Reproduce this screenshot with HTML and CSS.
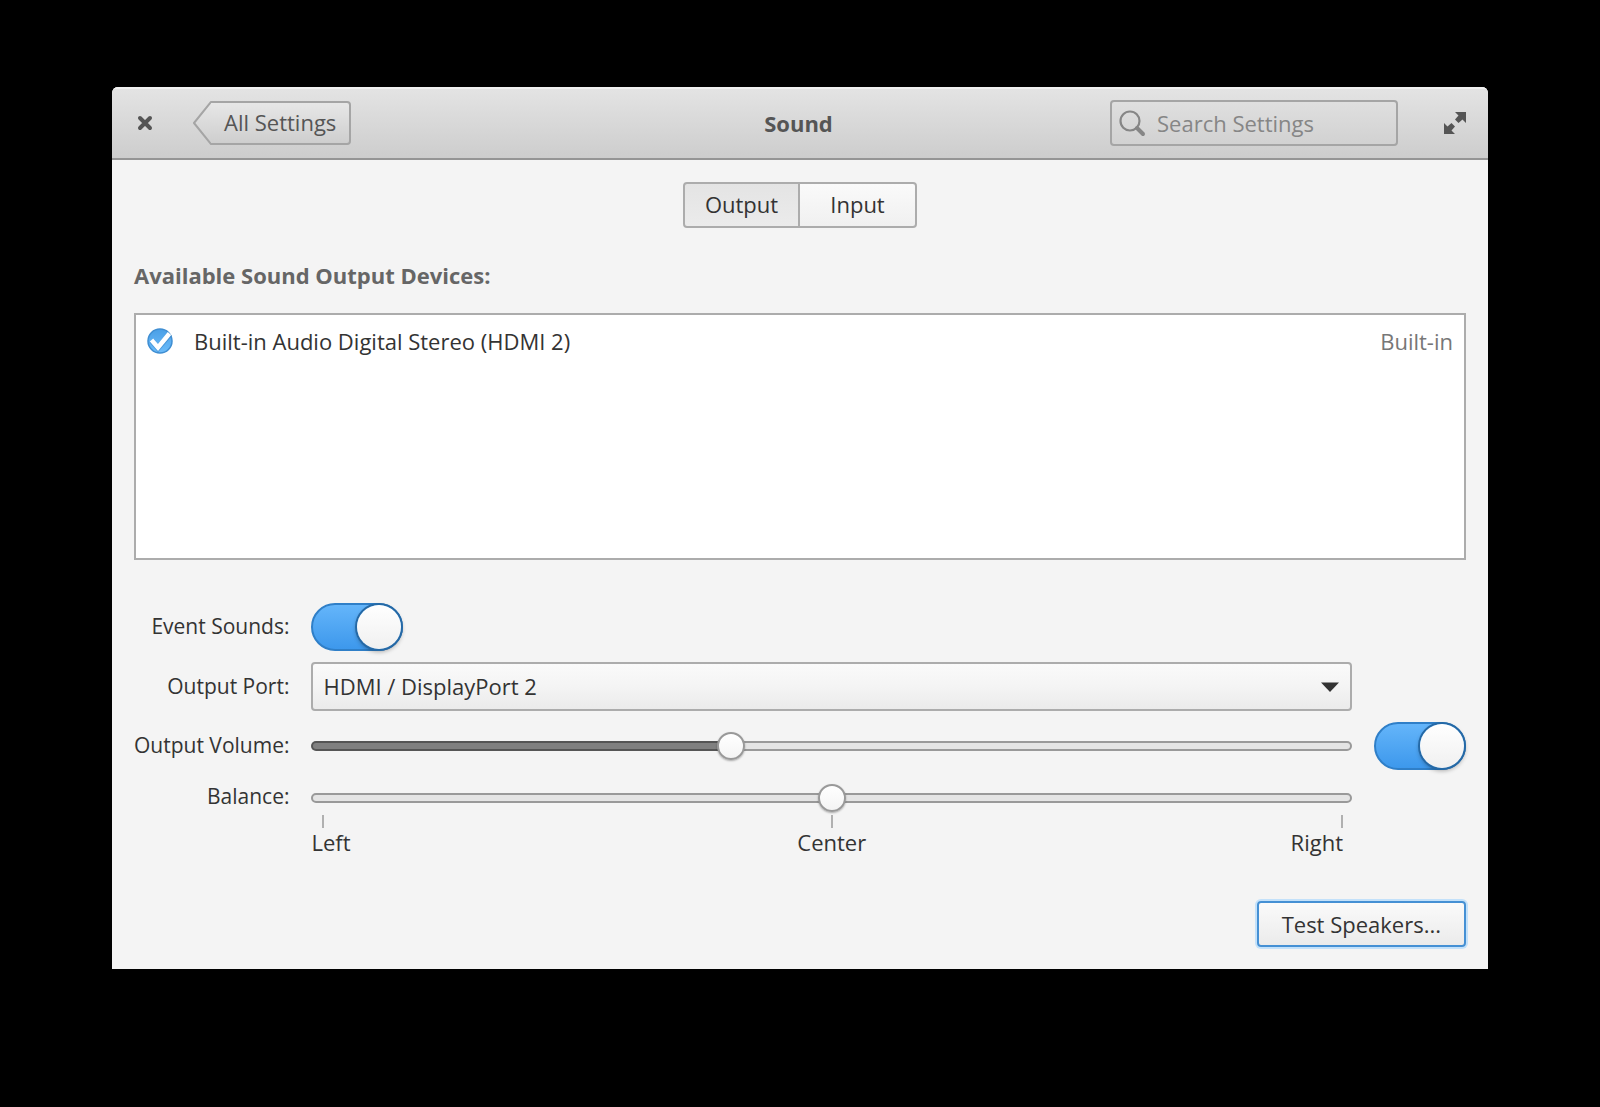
FILE: index.html
```html
<!DOCTYPE html>
<html lang="en">
<head>
    <meta charset="UTF-8">
    <meta name="viewport" content="width=device-width, initial-scale=1.0">
    <title>Sound</title>
    <link rel="stylesheet" href="styles.css">
</head>
<body>
    <div class="window">
        <header class="headerbar">
            <div class="header-left">
                <button type="button" class="icon-button" aria-label="Close">
                    <svg width="16" height="16" viewBox="0 0 16 16">
                        <path d="M3 3 L13 13 M13 3 L3 13" fill="none" stroke="#555" stroke-width="4" stroke-linecap="round" />
                    </svg>
                </button>
                <button type="button" class="back-button">
                    <svg class="back-arrow" width="18" height="44" viewBox="0 0 18 44">
                        <defs>
                            <linearGradient id="backFill" x1="0" y1="0" x2="0" y2="1">
                                <stop offset="0" stop-color="#e7e7e7" />
                                <stop offset="1" stop-color="#cecece" />
                            </linearGradient>
                        </defs>
                        <path d="M18 1 L1 22 L18 43 Z" fill="url(#backFill)" />
                        <path d="M18.5 1 L18 1 L1 22 L18 43 L18.5 43" fill="none" stroke="#a5a5a5" stroke-width="2" stroke-linejoin="round" />
                    </svg>
                    <span class="back-label">All Settings</span>
                </button>
            </div>
            <h1 class="title">Sound</h1>
            <div class="header-right">
                <div class="search">
                    <svg class="search-icon" width="28" height="28" viewBox="0 0 28 28">
                        <circle cx="12" cy="12" r="9.500" fill="none" stroke="#868686" stroke-width="2.200" />
                        <path d="M19 19 L25 25" stroke="#868686" stroke-width="4" stroke-linecap="round" />
                    </svg>
                    <input type="search" class="search-input" placeholder="Search Settings" aria-label="Search Settings">
                </div>
                <button type="button" class="icon-button" aria-label="Maximize">
                    <svg width="24" height="24" viewBox="0 0 24 24">
                        <path d="M12 1 H23 V12 L19.500 8.500 L15.500 12 L12 8.500 L15.500 4.500 Z" fill="#555" />
                        <path d="M12 23 H1 V12 L4.500 15.500 L8.500 12 L12 15.500 L8.500 19.500 Z" fill="#555" />
                    </svg>
                </button>
            </div>
        </header>

        <main class="content">
            <div class="tabs">
                <button type="button" class="tab active" aria-pressed="true">Output</button>
                <button type="button" class="tab" aria-pressed="false">Input</button>
            </div>

            <h2 class="section-title">Available Sound Output Devices:</h2>
            <div class="device-list">
                <label class="device">
                    <input type="radio" class="device-radio" name="device" checked>
                    <svg class="device-check" width="28" height="28" viewBox="0 0 28 28">
                        <defs>
                            <linearGradient id="checkFill" x1="0" y1="0" x2="0" y2="1">
                                <stop offset="0" stop-color="#4a9fe6" />
                                <stop offset="1" stop-color="#6cbcfa" />
                            </linearGradient>
                        </defs>
                        <circle cx="14" cy="14" r="12" fill="url(#checkFill)" stroke="#3f8ed2" stroke-width="1.500" />
                        <path d="M5.500 13.500 L12 21 L24 7" fill="none" stroke="#2f7cc0" stroke-opacity="0.500" stroke-width="5.500" />
                        <path d="M5.500 13 L12 20.500 L23.500 6.500" fill="none" stroke="#fff" stroke-width="4.500" />
                    </svg>
                    <span class="device-name">Built-in Audio Digital Stereo (HDMI 2)</span>
                    <span class="device-type">Built-in</span>
                </label>
            </div>

            <div class="settings">
                <label class="name" for="eventSounds">Event Sounds:</label>
                <input type="checkbox" class="switch" id="eventSounds" role="switch" checked>

                <label class="name row-start" for="outputPort">Output Port:</label>
                <div class="select-box">
                    <select class="select" id="outputPort">
                        <option>HDMI / DisplayPort 2</option>
                    </select>
                    <svg class="select-arrow" width="18" height="10" viewBox="0 0 18 10">
                        <path d="M0 0.500 H18 L9 10 Z" fill="#333" />
                    </svg>
                </div>

                <label class="name row-start" for="outputVolume">Output Volume:</label>
                <input type="range" class="slider volume" id="outputVolume" min="0" max="100" value="40" style="--value: 40%">
                <input type="checkbox" class="switch" role="switch" aria-label="Output enabled" checked>

                <label class="name balance-name row-start" for="balance">Balance:</label>
                <div class="balance">
                    <input type="range" class="slider" id="balance" min="-1" max="1" step="0.1" value="0">
                    <div class="marks">
                        <span class="mark mark-left">Left</span>
                        <span class="mark mark-center">Center</span>
                        <span class="mark mark-right">Right</span>
                    </div>
                </div>
            </div>

            <div class="actions">
                <button type="button" class="test-button">Test Speakers...</button>
            </div>
        </main>
    </div>

    <script>
        // Keep the filled part of the volume track in step with the thumb
        const volume = document.getElementById('outputVolume');
        volume.addEventListener('input', () => {
            volume.style.setProperty('--value', `${volume.value}%`);
        });
    </script>
</body>
</html>
```
FILE: styles.css
```css
* {
    box-sizing: border-box;
}

body {
    margin: 0;
    padding: 87px 112px;
    background: #000;
    color: #333;
    font-family: 'Open Sans', sans-serif;
    font-size: 22px;
    line-height: 30px;
}

button,
input,
select {
    margin: 0;
    font: inherit;
    color: inherit;
}

button {
    padding: 0;
    cursor: pointer;
}

svg {
    display: block;
}

.window {
    background: #f4f4f4;
    border-radius: 6px 6px 0 0;
    overflow: hidden;
}

/* Header bar */
.headerbar {
    display: grid;
    grid-template-columns: 1fr auto 1fr;
    align-items: center;
    height: 73px;
    padding: 0 21px 0 18px;
    background: linear-gradient(#e4e4e4, #cdcdcd);
    border-bottom: 2px solid #959595;
    box-shadow: inset 0 2px #f0f0f0;
    color: #555;
}

.header-left,
.header-right {
    display: flex;
    align-items: center;
}

.header-left {
    gap: 40px;
    padding-left: 7px;
}

.header-right {
    justify-content: flex-end;
    gap: 45px;
}

.icon-button {
    border: none;
    background: none;
}

.back-button {
    display: flex;
    border: none;
    background: none;
}

.back-label {
    height: 44px;
    padding: 4px 13px 0 13px;
    border: 2px solid #a5a5a5;
    border-left: none;
    border-radius: 0 4px 4px 0;
    background: linear-gradient(#e7e7e7, #cecece);
}

.title {
    margin: 0;
    font-size: 22px;
    font-weight: 700;
}

.search {
    display: flex;
    align-items: center;
    width: 288px;
    height: 46px;
    padding: 0 6px;
    gap: 11px;
    border: 2px solid #a5a5a5;
    border-radius: 4px;
}

.search-icon {
    flex: none;
}

.search-input {
    width: 100%;
    padding: 0;
    border: none;
    outline: none;
    background: none;
}

.search-input::placeholder {
    color: #868686;
}

/* Content */
.content {
    padding: 22px;
}

.tabs {
    display: flex;
    justify-content: center;
}

.tab {
    width: 119px;
    height: 46px;
    padding-bottom: 2px;
    border: 2px solid #acacac;
    border-radius: 0 4px 4px 0;
    background: linear-gradient(#fafafa, #f0f0f0);
}

.tab.active {
    width: 117px;
    margin-right: -2px;
    border-radius: 4px 0 0 4px;
    background: linear-gradient(#e4e4e4, #ebebeb);
}

.section-title {
    margin: 32px 0 23px;
    font-size: 22px;
    font-weight: 700;
    color: #666;
}

.device-list {
    min-height: 247px;
    border: 2px solid #acacac;
    background: #fff;
}

.device {
    display: flex;
    align-items: center;
    padding: 11px 11px 0 10px;
}

.device-radio {
    position: absolute;
    opacity: 0;
}

.device-name {
    flex: 1;
    padding-left: 20px;
}

.device-type {
    color: #777;
}

/* Settings grid */
.settings {
    display: grid;
    grid-template-columns: auto 1fr auto;
    align-items: center;
    gap: 11px 22px;
    margin-top: 43px;
}

.name {
    padding-bottom: 2px;
    font-size: 21px;
    text-align: right;
}

.row-start {
    grid-column: 1;
}

.switch {
    appearance: none;
    width: 92px;
    height: 48px;
    border: 2px solid #2f7fc8;
    border-radius: 24px;
    background: linear-gradient(#64b5fa, #3d98ec);
    cursor: pointer;
}

.switch::before {
    content: "";
    display: block;
    width: 44px;
    height: 44px;
    border-radius: 50%;
    background: linear-gradient(#fff, #f0f0f0);
    box-shadow: 0 0 0 2px #2569a6, 0 2px 4px 1px rgba(0, 0, 0, 0.3);
}

.switch:checked::before {
    margin-left: auto;
}

.select-box {
    position: relative;
}

.select {
    display: block;
    appearance: none;
    width: 100%;
    height: 49px;
    padding: 0 44px 2px 10px;
    border: 2px solid #acacac;
    border-radius: 4px;
    background: linear-gradient(#fafafa, #f4f4f4 50%, #ebebeb);
}

.select-arrow {
    position: absolute;
    top: 20px;
    right: 13px;
    pointer-events: none;
}

.slider {
    display: block;
    appearance: none;
    width: 100%;
    height: 34px;
    background: none;
}

.slider::-webkit-slider-runnable-track {
    height: 10px;
    border: 2px solid #999;
    border-radius: 5px;
    background: #e4e4e4;
}

.slider::-webkit-slider-thumb {
    appearance: none;
    width: 28px;
    height: 28px;
    margin-top: -11px;
    border: 2px solid #999;
    border-radius: 50%;
    background: linear-gradient(#fff, #f4f4f4);
    box-shadow: 0 1px 2px rgba(0, 0, 0, 0.3);
}

.volume::-webkit-slider-runnable-track {
    border-color: transparent;
    background:
        linear-gradient(#808080, #808080) 0 0 / var(--value) 100% no-repeat padding-box,
        linear-gradient(#555, #555) 0 0 / var(--value) 100% no-repeat border-box,
        linear-gradient(#e4e4e4, #e4e4e4) padding-box,
        linear-gradient(#999, #999) border-box;
}

.balance-name {
    align-self: start;
}

.marks {
    display: grid;
    grid-template-columns: 1fr auto 1fr;
    padding-right: 9px;
    padding-left: 9px;
    line-height: 28px;
}

.mark::before {
    content: "";
    display: block;
    width: 2px;
    height: 13px;
    background: #b0b0b0;
}

.mark-left {
    margin-left: -9px;
}

.mark-left::before {
    margin-left: 11px;
}

.mark-center::before {
    margin: 0 auto;
}

.mark-right {
    text-align: right;
}

.mark-right::before {
    margin-left: auto;
}

.actions {
    display: flex;
    justify-content: flex-end;
    margin-top: 45px;
}

.test-button {
    height: 46px;
    padding: 0 23px;
    border: 2px solid #4590d4;
    border-radius: 4px;
    background: linear-gradient(#fafafa, #ebebeb);
    box-shadow: 0 0 0 2px #c3e1fa;
}
```
